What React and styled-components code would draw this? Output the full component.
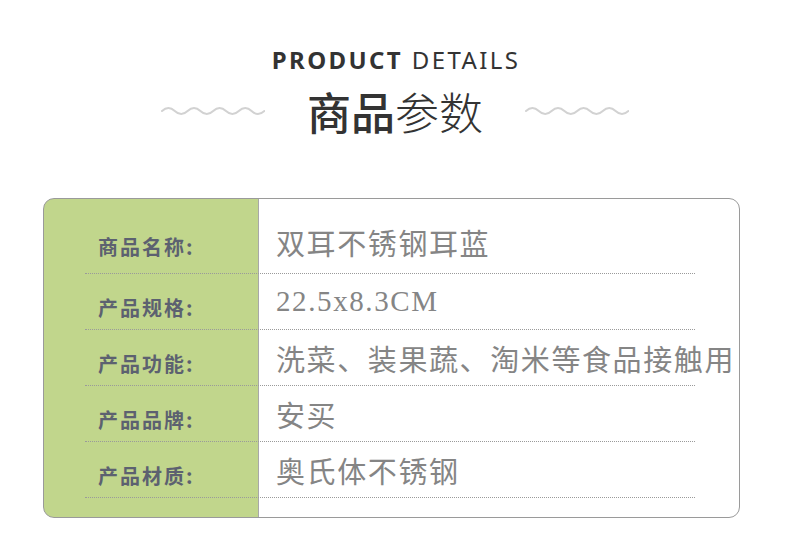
import styled, { createGlobalStyle } from 'styled-components'

const GlobalStyle = createGlobalStyle`
  html, body {
    margin: 0;
    padding: 0;
    background: #fff;
  }
`

const Page = styled.div`
  width: 790px;
  padding-top: 45px;
  font-family: "Noto Sans", "Noto Sans CJK SC", sans-serif;
`

const EnTitle = styled.div`
  text-align: center;
  font-size: 24px;
  line-height: 30px;
  letter-spacing: 2.4px;
  color: #333;
  font-weight: 400;
  padding-left: 2px;
  b {
    font-weight: 700;
  }
`

const TitleRow = styled.div`
  display: flex;
  align-items: center;
  justify-content: center;
  gap: 42px;
  margin-top: 10px;
  height: 52px;
`

const CnTitle = styled.div`
  font-family: "Noto Sans CJK SC", sans-serif;
  font-size: 44px;
  line-height: 52px;
  color: #333;
  font-weight: 300;
  b {
    font-weight: 500;
  }
`

const Card = styled.div`
  margin: 61px 0 0 43px;
  width: 697px;
  height: 320px;
  box-sizing: border-box;
  border: 1px solid #9a9a9a;
  border-radius: 11px;
  overflow: hidden;
  padding-top: 19px;
  background: linear-gradient(
    to right,
    #c1d68c 0,
    #c1d68c 214px,
    #a8a8a8 214px,
    #a8a8a8 215px,
    #fff 215px
  );
`

const Row = styled.div`
  display: flex;
  align-items: center;
  height: 56px;
  box-sizing: border-box;
  margin-left: 41px;
  width: 610px;
  border-bottom: 1px dotted #9a9a9a;
`

const Label = styled.div`
  width: 173px;
  flex: none;
  box-sizing: border-box;
  padding: ${p => (p.$first ? '2px' : '12px')} 0 0 13px;
  font-family: "Noto Sans CJK SC", sans-serif;
  font-weight: 700;
  font-size: 20px;
  letter-spacing: 2px;
  color: #5c6170;
`

const Value = styled.div`
  padding: 0 0 ${p => (p.$first ? '8px' : '0')} 18px;
  white-space: nowrap;
  font-family: "Liberation Serif", "Noto Sans CJK SC", serif;
  font-size: 29px;
  letter-spacing: 1.6px;
  color: #858585;
`

const Wave = () => (
  <svg width="104" height="12" viewBox="0 0 104 12">
    <path
      d="M1 6 q6.4 -6 12.8 0 t12.8 0 t12.8 0 t12.8 0 t12.8 0 t12.8 0 t12.8 0 t12.8 0"
      fill="none"
      stroke="#d2d2d2"
      strokeWidth="2"
      strokeLinecap="round"
    />
  </svg>
)

const specs = [
  ['商品名称:', '双耳不锈钢耳蓝'],
  ['产品规格:', '22.5x8.3CM'],
  ['产品功能:', '洗菜、装果蔬、淘米等食品接触用'],
  ['产品品牌:', '安买'],
  ['产品材质:', '奥氏体不锈钢'],
]

export default function App() {
  return (
    <Page>
      <GlobalStyle />
      <EnTitle>
        <b>PRODUCT</b> DETAILS
      </EnTitle>
      <TitleRow>
        <Wave />
        <CnTitle>
          <b>商品</b>参数
        </CnTitle>
        <Wave />
      </TitleRow>
      <Card>
        {specs.map(([k, v], i) => (
          <Row key={k}>
            <Label $first={i === 0}>{k}</Label>
            <Value $first={i === 0}>{v}</Value>
          </Row>
        ))}
      </Card>
    </Page>
  )
}
